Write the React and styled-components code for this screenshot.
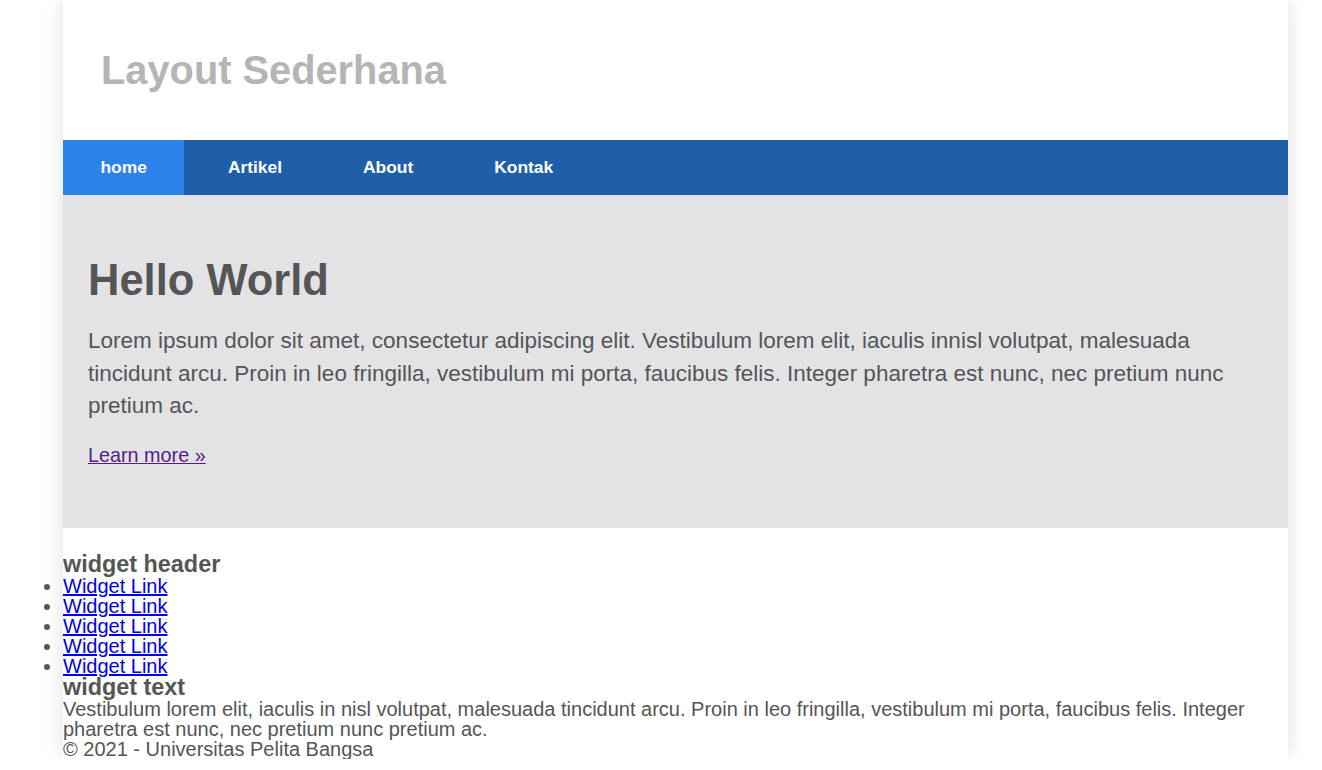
import React from "react";
import styled, { createGlobalStyle } from "styled-components";

const GlobalStyle = createGlobalStyle`
  body {
    margin: 0;
    background: #fff;
    font-family: "Liberation Sans", Arial, sans-serif;
    font-size: 20px;
    color: #555;
  }
`;

const Container = styled.div`
  width: 1225px;
  margin-left: 63px;
  background: #fff;
  box-shadow: 0 0 20px rgba(0, 0, 0, 0.12);
`;

const Header = styled.header`
  height: 140px;
  display: flex;
  align-items: center;
  padding-left: 38px;

  h1 {
    margin: 0;
    font-size: 39.8px;
    font-weight: bold;
    color: #b5b5b5;
  }
`;

const Nav = styled.nav`
  background: #1f5faa;
  display: flex;
  gap: 6px;
  height: 55px;
`;

const NavItem = styled.a`
  display: block;
  padding: 0 37.5px;
  line-height: 55px;
  font-size: 17.4px;
  font-weight: bold;
  color: #fff;
  text-decoration: none;
  background: ${({ active }) => (active ? "#2b83ea" : "transparent")};
`;

const Hero = styled.section`
  background: #e3e3e6;
  height: 333px;
  box-sizing: border-box;
  padding: 60px 25px 0;

  h2 {
    margin: 0 0 20px;
    font-size: 43.5px;
    line-height: 50px;
    font-weight: bold;
    color: #555;
  }

  p {
    margin: 0 0 21px;
    font-size: 22.5px;
    line-height: 32.5px;
  }

  a {
    color: #551a8b;
    font-size: 19.8px;
  }
`;

const Aside = styled.aside`
  padding-top: 25px;

  h3 {
    margin: 0;
    font-size: 23.4px;
    line-height: 23px;
    font-weight: bold;
  }
`;

const WidgetList = styled.ul`
  margin: 0;
  padding: 0;
  list-style: disc outside;

  li {
    line-height: 20px;
  }

  a {
    color: #0000ee;
  }
`;

const WidgetText = styled.p`
  margin: 0;
  line-height: 20px;
`;

const Footer = styled.footer`
  line-height: 20px;
`;

const links = ["Artikel", "About", "Kontak"];

export default function App() {
  return (
    <>
      <GlobalStyle />
      <Container>
        <Header>
          <h1>Layout Sederhana</h1>
        </Header>
        <Nav>
          <NavItem href="#" active>
            home
          </NavItem>
          {links.map((l) => (
            <NavItem href="#" key={l}>
              {l}
            </NavItem>
          ))}
        </Nav>
        <Hero>
          <h2>Hello World</h2>
          <p>
            Lorem ipsum dolor sit amet, consectetur adipiscing elit. Vestibulum
            lorem elit, iaculis innisl volutpat, malesuada tincidunt arcu. Proin
            in leo fringilla, vestibulum mi porta, faucibus felis. Integer
            pharetra est nunc, nec pretium nunc pretium ac.
          </p>
          <a href="#">Learn more »</a>
        </Hero>
        <Aside>
          <h3>widget header</h3>
          <WidgetList>
            {[1, 2, 3, 4, 5].map((i) => (
              <li key={i}>
                <a href="#">Widget Link</a>
              </li>
            ))}
          </WidgetList>
          <h3>widget text</h3>
          <WidgetText>
            Vestibulum lorem elit, iaculis in nisl volutpat, malesuada tincidunt
            arcu. Proin in leo fringilla, vestibulum mi porta, faucibus felis.
            Integer pharetra est nunc, nec pretium nunc pretium ac.
          </WidgetText>
        </Aside>
        <Footer>© 2021 - Universitas Pelita Bangsa</Footer>
      </Container>
    </>
  );
}
